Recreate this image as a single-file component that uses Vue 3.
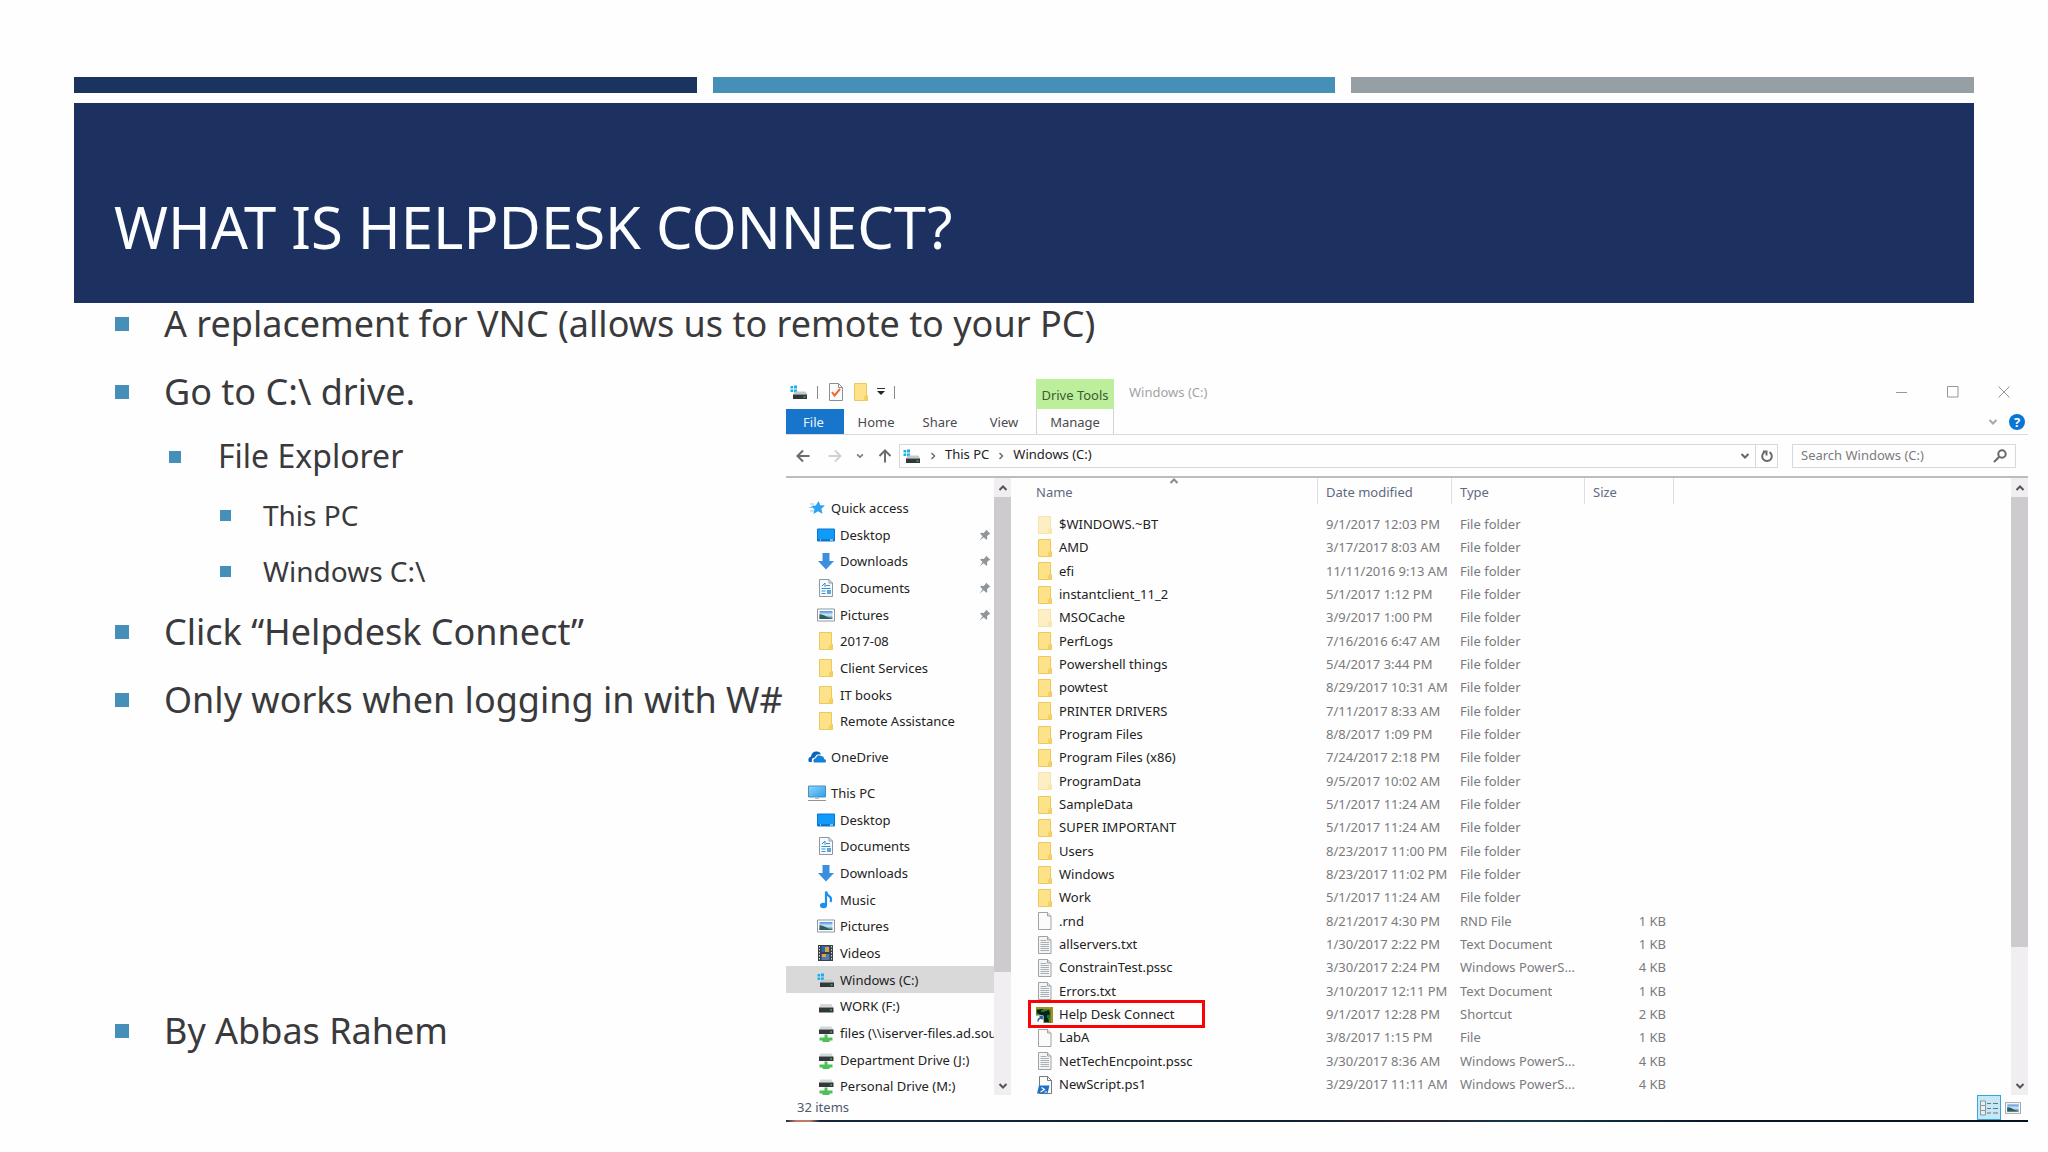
<script setup>
const ribbonTabs = ['Home', 'Share', 'View']

const navGroups = [
  {
    title: 'Quick access', icon: 'star',
    items: [
      { label: 'Desktop', icon: 'desktop', pinned: true },
      { label: 'Downloads', icon: 'download', pinned: true },
      { label: 'Documents', icon: 'document', pinned: true },
      { label: 'Pictures', icon: 'picture', pinned: true },
      { label: '2017-08', icon: 'folder' },
      { label: 'Client Services', icon: 'folder' },
      { label: 'IT books', icon: 'folder' },
      { label: 'Remote Assistance', icon: 'folder' },
    ],
  },
  { title: 'OneDrive', icon: 'cloud', items: [] },
  {
    title: 'This PC', icon: 'pc',
    items: [
      { label: 'Desktop', icon: 'desktop' },
      { label: 'Documents', icon: 'document' },
      { label: 'Downloads', icon: 'download' },
      { label: 'Music', icon: 'music' },
      { label: 'Pictures', icon: 'picture' },
      { label: 'Videos', icon: 'video' },
      { label: 'Windows (C:)', icon: 'sysdrive', selected: true },
      { label: 'WORK (F:)', icon: 'drive' },
      { label: 'files (\\\\iserver-files.ad.sout', icon: 'netdrive' },
      { label: 'Department Drive (J:)', icon: 'netdrive' },
      { label: 'Personal Drive (M:)', icon: 'netdrive' },
    ],
  },
]

const folder = (name, date, hidden = false) => ({ name, date, type: 'File folder', size: '', icon: 'folder', hidden })
const file = (name, date, type, size, icon) => ({ name, date, type, size, icon })

const files = [
  folder('$WINDOWS.~BT', '9/1/2017 12:03 PM', true),
  folder('AMD', '3/17/2017 8:03 AM'),
  folder('efi', '11/11/2016 9:13 AM'),
  folder('instantclient_11_2', '5/1/2017 1:12 PM'),
  folder('MSOCache', '3/9/2017 1:00 PM', true),
  folder('PerfLogs', '7/16/2016 6:47 AM'),
  folder('Powershell things', '5/4/2017 3:44 PM'),
  folder('powtest', '8/29/2017 10:31 AM'),
  folder('PRINTER DRIVERS', '7/11/2017 8:33 AM'),
  folder('Program Files', '8/8/2017 1:09 PM'),
  folder('Program Files (x86)', '7/24/2017 2:18 PM'),
  folder('ProgramData', '9/5/2017 10:02 AM', true),
  folder('SampleData', '5/1/2017 11:24 AM'),
  folder('SUPER IMPORTANT', '5/1/2017 11:24 AM'),
  folder('Users', '8/23/2017 11:00 PM'),
  folder('Windows', '8/23/2017 11:02 PM'),
  folder('Work', '5/1/2017 11:24 AM'),
  file('.rnd', '8/21/2017 4:30 PM', 'RND File', '1 KB', 'blank'),
  file('allservers.txt', '1/30/2017 2:22 PM', 'Text Document', '1 KB', 'text'),
  file('ConstrainTest.pssc', '3/30/2017 2:24 PM', 'Windows PowerS...', '4 KB', 'text'),
  file('Errors.txt', '3/10/2017 12:11 PM', 'Text Document', '1 KB', 'text'),
  { ...file('Help Desk Connect', '9/1/2017 12:28 PM', 'Shortcut', '2 KB', 'shortcut'), marked: true },
  file('LabA', '3/8/2017 1:15 PM', 'File', '1 KB', 'blank'),
  file('NetTechEncpoint.pssc', '3/30/2017 8:36 AM', 'Windows PowerS...', '4 KB', 'text'),
  file('NewScript.ps1', '3/29/2017 11:11 AM', 'Windows PowerS...', '4 KB', 'script'),
]
</script>

<template>
  <main class="slide">
    <svg class="sprite" aria-hidden="true">
      <defs>
        <linearGradient id="g-sky" x1="0" y1="0" x2="0" y2="1">
          <stop offset="0" stop-color="#4a8fe0" /><stop offset=".5" stop-color="#d6ecfa" /><stop offset="1" stop-color="#2d6a78" />
        </linearGradient>
        <linearGradient id="g-screen" x1="0" y1="0" x2="1" y2="1">
          <stop offset="0" stop-color="#8fd3fb" /><stop offset="1" stop-color="#2ba0ec" />
        </linearGradient>
      </defs>
      <symbol id="i-folder" viewBox="0 0 18 18">
        <path d="M2.500 .5h12v12h1v5h-13z" fill="#fde28a" stroke="#ecc95c" />
        <path d="M12.500 12.500h3v5h-4z" fill="#f5cf5f" />
      </symbol>
      <symbol id="i-star" viewBox="0 0 18 18">
        <path d="M10.500 2l1.800 4.300 4.700.2-3.600 3.200 1 5L10 12.300 5.500 15l1-4.800L3 7l4.800-.6z" fill="#2f9ff0" />
        <path d="M2 5h4M1 8.500h4M2 12h4" stroke="#8cc9f4" />
      </symbol>
      <symbol id="i-desktop" viewBox="0 0 18 18">
        <path d="M.5 3h17v12H.5z" fill="#109bfa" stroke="#0b78cf" />
        <path d="M1 14h16" stroke="#0a5ea8" /><path d="M3 14h1M13 14h3" stroke="#fff" />
      </symbol>
      <symbol id="i-download" viewBox="0 0 18 18">
        <path d="M5.500 1h7v8H17l-8 8.500L1 9h4.500z" fill="#3a8fdf" />
      </symbol>
      <symbol id="i-document" viewBox="0 0 18 18">
        <path d="M2.500.5h9.500l3.500 3.500v13.500h-13z" fill="#f7f9fb" stroke="#8f979e" />
        <path d="M12 .5V4h3.500" fill="none" stroke="#8f979e" />
        <path d="M5 7l3-3v4M9 6.500h4M4.500 9.500h9M4.500 12h4M4.500 14.500h4" fill="none" stroke="#2f93d6" />
        <path d="M10 11h4v4h-4z" fill="#5ba6db" />
      </symbol>
      <symbol id="i-picture" viewBox="0 0 18 18">
        <path d="M.5 3h17v12H.5z" fill="#fff" stroke="#90979d" />
        <path d="M2.500 5h13v8h-13z" fill="url(#g-sky)" />
        <path d="M2.500 8q5 1 8 3t5 2h-13z" fill="#2c5f62" />
      </symbol>
      <symbol id="i-cloud" viewBox="0 0 18 18">
        <path d="M1 14q-2-4 2-5.500Q4 3 9 3.500q3 0 4 3-5-1-6 3-4 0-3 4.500z" fill="#0a65b8" />
        <path d="M6 14.500q-2-3.500 2-4.500 1-4 5-2 3 0 3 3 3 .5 1.500 3.500z" fill="#1580d8" />
      </symbol>
      <symbol id="i-pc" viewBox="0 0 18 18">
        <path d="M.5 2h17v11H.5z" fill="url(#g-screen)" stroke="#4a90be" />
        <path d="M7 13h4v2H7z" fill="#b8c0c6" /><path d="M0 16.500h18" stroke="#8d979e" />
      </symbol>
      <symbol id="i-music" viewBox="0 0 18 18">
        <ellipse cx="6.500" cy="14.500" rx="3.500" ry="2.700" fill="#1a8fee" />
        <path d="M9 14V.5q1 3.500 3.500 5t1 5.500" fill="none" stroke="#1a8fee" stroke-width="2.200" />
      </symbol>
      <symbol id="i-video" viewBox="0 0 18 18">
        <path d="M1 1h15v16H1z" fill="#3b4046" />
        <path d="M2.500 2v15M14.500 2v15" stroke="#d3d7da" stroke-dasharray="1.500 1.500" />
        <path d="M4.500 2h8v6h-8z" fill="#2b64c0" /><path d="M8 3h4v5H8z" fill="#d9a92e" />
        <path d="M4.500 10h8v6h-8z" fill="#5478b2" /><path d="M5 10h4v3H5z" fill="#e2a33a" />
      </symbol>
      <symbol id="i-drive" viewBox="0 0 18 18">
        <path d="M3.500 7h11l1.500 3.500H2z" fill="#d5d7d9" />
        <path d="M2 10.500h14.500v5H2z" fill="#33373b" /><path d="M13 13h2" stroke="#4fe070" />
      </symbol>
      <symbol id="i-sysdrive" viewBox="0 0 18 18">
        <path d="M.5 3h2.700v2.500H.5zM4 2.500h3v3H4zM.5 6.500h2.700V9H.5zM4 6.500h3v3H4z" fill="#18b0ee" />
        <path d="M5 8.500h10.500l1.500 3H3z" fill="#c4c8cb" />
        <path d="M3 11.500h14v4.500H3z" fill="#33373b" /><path d="M13.500 14h2" stroke="#4fe070" />
      </symbol>
      <symbol id="i-netdrive" viewBox="0 0 18 18">
        <path d="M3.500 2.500h11l1.500 3H2z" fill="#d5d7d9" />
        <path d="M2 5.500h14.500v4.500H2z" fill="#33373b" /><path d="M13 8h2" stroke="#4fe070" />
        <path d="M7.500 10.500h3v3h5v3h-3v1.500h-7v-1.500h-3v-3h5z" fill="#4fc057" />
      </symbol>
      <symbol id="i-blank" viewBox="0 0 18 18">
        <path d="M2.500.5h9l3.500 3.500v13.500H2.500z" fill="#fbfbfb" stroke="#a2a2a5" />
        <path d="M11.500.5V4H15" fill="#e4e4e6" stroke="#a2a2a5" />
      </symbol>
      <symbol id="i-text" viewBox="0 0 18 18">
        <path d="M2.500.5h9l3.500 3.500v13.500H2.500z" fill="#f3f4f5" stroke="#a2a2a5" />
        <path d="M11.500.5V4H15" fill="#ddd" stroke="#a2a2a5" />
        <path d="M4.500 4.500h6M4.500 6.500h8.500M4.500 8.500h8.500M4.500 10.500h8.500M4.500 12.500h8.500M4.500 14.500h8.500" stroke="#a9b0b5" />
      </symbol>
      <symbol id="i-script" viewBox="0 0 18 18">
        <path d="M3.500.5h8l4 4v13h-12z" fill="#fbfbfb" stroke="#77797c" /><path d="M11.500.5v4h4" fill="none" stroke="#77797c" />
        <path d="M3 9.500h10.500l-2 8H1z" fill="#1f6fc8" />
        <path d="M5.500 11.500l3 2-4 2.500M8.500 16h2.500" fill="none" stroke="#fff" stroke-width="1.200" />
      </symbol>
      <symbol id="i-shortcut" viewBox="0 0 18 18">
        <path d="M0 1h17v16H0z" fill="#57851f" /><path d="M0 1h17v2H0zM15 1h2v16h-2z" fill="#a98f28" />
        <path d="M1 4l5-1 3 2 4-1 1 4-2 3 1 5H8l-1-6-6-3z" fill="#04231a" />
        <path d="M5 4h4v2H5zM11 9h3v3h-3z" fill="#117a3c" />
        <path d="M0 9.500h7.500V17H0z" fill="#fff" /><path d="M2 15.500q0-3.500 3.500-3.500M3.500 10.800h2.700v2.700" fill="none" stroke="#2a5fb0" stroke-width="1.400" />
      </symbol>
      <symbol id="i-check" viewBox="0 0 18 18">
        <path d="M2.500.5h9l4 4v13h-13z" fill="#fcfcfc" stroke="#8b8f93" /><path d="M11.500.5v4h4" fill="none" stroke="#8b8f93" />
        <path d="M5 9l2.500 3.500L13 6" fill="none" stroke="#ee6a30" stroke-width="2" />
      </symbol>
      <symbol id="i-pin" viewBox="0 0 12 12">
        <path d="M7 .5L11.500 5l-1.500.3-2 2 .3 2.700-1 .8-2.600-2.600L.5 11.500 3.600 7.200 1.200 4.800l.8-1 2.700.3 2-2z" fill="#8e959b" />
      </symbol>
      <symbol id="i-up" viewBox="0 0 10 8"><path d="M1.500 6L5 2.500 8.500 6" fill="none" stroke="currentColor" stroke-width="2" /></symbol>
      <symbol id="i-down" viewBox="0 0 10 8"><path d="M1.500 2L5 5.500 8.500 2" fill="none" stroke="currentColor" stroke-width="2" /></symbol>
      <symbol id="i-right" viewBox="0 0 6 8"><path d="M1.500 1L4.500 4l-3 3" fill="none" stroke="currentColor" stroke-width="1.400" /></symbol>
    </svg>

    <div class="stripes"><i class="navy"></i><i class="blue"></i><i class="grey"></i></div>
    <header class="banner"><h1>WHAT IS HELPDESK CONNECT?</h1></header>

    <div class="content">
      <ul class="points">
        <li>A replacement for VNC (allows us to remote to your PC)</li>
        <li class="branch">
          Go to C:\ drive.
          <ul class="level2">
            <li>
              File Explorer
              <ul class="level3">
                <li>This PC</li>
                <li>Windows C:\</li>
              </ul>
            </li>
          </ul>
        </li>
        <li>Click “Helpdesk Connect”</li>
        <li>Only works when logging in with W#</li>
        <li class="author">By Abbas Rahem</li>
      </ul>

      <section class="explorer" aria-label="File Explorer">
        <div class="titlebar">
          <div class="quick">
            <svg class="icon"><use href="#i-sysdrive" /></svg>
            <span class="bar"></span>
            <button aria-label="Properties"><svg class="icon"><use href="#i-check" /></svg></button>
            <button aria-label="New folder"><svg class="icon"><use href="#i-folder" /></svg></button>
            <button aria-label="Customize toolbar">
              <svg width="8" height="8" viewBox="0 0 8 8"><path d="M0 .5h8" stroke="#333" /><path d="M0 3h8L4 7z" fill="#222" /></svg>
            </button>
            <span class="bar"></span>
          </div>
          <span class="context">Drive Tools</span>
          <span class="caption">Windows (C:)</span>
          <div class="window-buttons">
            <button aria-label="Minimize"><svg width="12" height="12"><path d="M0 6.500h11" /></svg></button>
            <button aria-label="Maximize"><svg width="12" height="12"><path d="M.5.5h10.500v10.500H.5z" /></svg></button>
            <button aria-label="Close"><svg width="12" height="12"><path d="M.5.5l11 11M11.500.5l-11 11" /></svg></button>
          </div>
        </div>

        <div class="ribbon">
          <button class="file-tab">File</button>
          <button v-for="tab in ribbonTabs" :key="tab" class="tab">{{ tab }}</button>
          <button class="tab manage">Manage</button>
          <div class="ribbon-end">
            <button aria-label="Expand ribbon"><svg class="chev"><use href="#i-down" /></svg></button>
            <button class="help" aria-label="Help">?</button>
          </div>
        </div>

        <div class="address">
          <div class="arrows">
            <button aria-label="Back"><svg width="14" height="14"><path d="M13.500 7H1.500M7 1.500L1.500 7 7 12.500" /></svg></button>
            <button aria-label="Forward" class="off"><svg width="14" height="14"><path d="M.5 7h12M7 1.500L12.500 7 7 12.500" /></svg></button>
            <button aria-label="Recent locations"><svg class="chev small"><use href="#i-down" /></svg></button>
            <button aria-label="Up"><svg width="14" height="14"><path d="M7 13.500V1.500M1.500 7L7 1.500 12.500 7" /></svg></button>
          </div>
          <div class="path">
            <svg class="icon"><use href="#i-sysdrive" /></svg>
            <svg class="sep"><use href="#i-right" /></svg>
            <a href="#">This PC</a>
            <svg class="sep"><use href="#i-right" /></svg>
            <a href="#">Windows (C:)</a>
            <button class="history" aria-label="Previous locations"><svg class="chev"><use href="#i-down" /></svg></button>
            <button class="refresh" aria-label="Refresh">
              <svg width="14" height="14"><path d="M9.500 3.200a4.800 4.800 0 1 1-5 0" /><path d="M3 2.500h3.500V6.500" /></svg>
            </button>
          </div>
          <label class="search">
            <input type="text" placeholder="Search Windows (C:)" aria-label="Search Windows (C:)" />
            <svg width="14" height="14"><circle cx="9" cy="5" r="3.700" /><path d="M6.300 7.700L1 13" /></svg>
          </label>
        </div>

        <div class="panes">
          <nav class="tree">
            <ul v-for="group in navGroups" :key="group.title">
              <li>
                <a href="#" class="root"><svg class="icon"><use :href="'#i-' + group.icon" /></svg>{{ group.title }}</a>
              </li>
              <li v-for="item in group.items" :key="item.label">
                <a href="#" :class="{ selected: item.selected }">
                  <svg class="icon"><use :href="'#i-' + item.icon" /></svg><span>{{ item.label }}</span>
                  <svg v-if="item.pinned" class="pin"><use href="#i-pin" /></svg>
                </a>
              </li>
            </ul>
          </nav>
          <div class="scroll">
            <svg class="chev"><use href="#i-up" /></svg>
            <i class="thumb tree-thumb"></i>
            <svg class="chev last"><use href="#i-down" /></svg>
          </div>

          <div class="list">
            <table>
              <thead>
                <tr>
                  <th class="c-name"><span>Name<svg class="sort"><use href="#i-up" /></svg></span></th>
                  <th class="c-date"><span>Date modified</span></th>
                  <th class="c-type"><span>Type</span></th>
                  <th class="c-size"><span>Size</span></th>
                </tr>
              </thead>
              <tbody>
                <tr v-for="row in files" :key="row.name">
                  <td class="name" :class="{ faded: row.hidden, marked: row.marked }">
                    <div><svg class="icon"><use :href="'#i-' + row.icon" /></svg>{{ row.name }}</div>
                  </td>
                  <td>{{ row.date }}</td>
                  <td>{{ row.type }}</td>
                  <td class="size">{{ row.size }}</td>
                </tr>
              </tbody>
            </table>
          </div>
          <div class="scroll">
            <svg class="chev"><use href="#i-up" /></svg>
            <i class="thumb list-thumb"></i>
            <svg class="chev last"><use href="#i-down" /></svg>
          </div>
        </div>

        <footer class="status">
          <span>32 items</span>
          <div class="views">
            <button class="active" aria-label="Details view">
              <svg width="18" height="16"><path d="M.5 1h5v14h-5zM.5 5.500h5M.5 10.500h5" fill="#e6eef2" stroke="#8b979f" /><path d="M7 3.500h4M13 3.500h5M7 8.500h4M13 8.500h5M7 13h4M13 13h5" stroke="#66757e" /></svg>
            </button>
            <button aria-label="Large icons view"><svg class="icon"><use href="#i-picture" /></svg></button>
          </div>
        </footer>
      </section>
    </div>
  </main>
</template>

<style>
body { margin: 0; background: #fefefe; }
</style>

<style scoped>
*, *::before, *::after { box-sizing: border-box; }
.slide { font-family: "Noto Sans", "Open Sans", sans-serif; color: #3a3a3c; padding-top: 77px; overflow: hidden; }
.sprite { position: absolute; width: 0; height: 0; }
ul { list-style: none; margin: 0; padding: 0; }
button { border: 0; padding: 0; margin: 0; background: none; font: inherit; color: inherit; display: flex; align-items: center; justify-content: center; }
a { color: inherit; text-decoration: none; }
svg { flex: none; display: block; }
.icon { width: 18px; height: 18px; }
.chev { width: 10px; height: 8px; }

.stripes { display: grid; grid-template-columns: repeat(3, 1fr); gap: 16px; margin: 0 74px; height: 16px; }
.navy { background: #1a335f; }
.blue { background: #458fb8; }
.grey { background: #969fa4; }
.banner { margin: 10px 74px 0; height: 200px; padding: 88px 40px 0; background: #1c315f; color: #fbfdff; }
h1 { margin: 0; font-size: 58px; line-height: 72px; font-weight: 400; white-space: nowrap; }

.content { display: grid; grid-template-columns: 712px 1fr; margin: 0 20px 0 74px; }
.points { grid-column: 1 / 3; grid-row: 1; padding: 3px 0 0 41px; font-size: 36px; line-height: 36px; white-space: nowrap; }
.points li { position: relative; padding-left: 49px; margin-bottom: 32px; }
.points li::before { content: ""; position: absolute; left: 0; top: 11px; width: 14px; height: 14px; background: #458fb8; }
.points li.branch { margin-bottom: 25px; }
.points .level2 { margin: 28px 0 0 5px; font-size: 32px; }
.points .level2 li::before { top: 13px; width: 12px; height: 12px; }
.points .level2 > li { margin-bottom: 0; }
.points .level3 { margin: 23px 0 0 2px; font-size: 28px; }
.points .level3 li { padding-left: 43px; margin-bottom: 20px; }
.points .level3 li:last-child { margin-bottom: 0; }
.points .level3 li::before { width: 11px; height: 11px; }
.points li.author { margin: 295px 0 0; }

.explorer { grid-column: 2; grid-row: 1; z-index: 1; margin-top: 72px; background: #fefefe; font-size: 13px; line-height: 20px; color: #222; padding-bottom: 2px; background-image: linear-gradient(90deg, #1a2b40 0, #c07a68 10px, #c07a68 24px, #12263a 34px, #0d2233 40%, #2b1f30 50%, #0f3b48 60%, #0a1626 75%, #06131f); background-position: bottom; background-size: 100% 2px; background-repeat: no-repeat; align-self: start; }

.titlebar { display: flex; height: 34px; align-items: center; padding-right: 18px; }
.quick { display: flex; align-items: center; width: 250px; padding-left: 4px; gap: 7px; }
.bar { width: 1px; height: 13px; background: #8a8a8a; margin: 0 2px; }
.context { align-self: flex-end; width: 78px; height: 30px; line-height: 32px; background: #bcee9c; color: #3d5a33; text-align: center; }
.caption { padding-left: 15px; color: #a3a3a6; }
.window-buttons { margin-left: auto; display: flex; gap: 39px; }
.window-buttons path { fill: none; stroke: #97979a; }

.ribbon { display: flex; height: 26px; border-bottom: 1px solid #dadade; color: #4a4a4e; }
.file-tab { width: 58px; padding-right: 3px; background: #1776cb; color: #eaf4fd; }
.tab { width: 64px; }
.tab.manage { width: 78px; border: solid #d4d4d8; border-width: 0 1px; background: #fefefe; }
.ribbon-end { margin-left: auto; display: flex; align-items: center; gap: 11px; padding-right: 3px; color: #a8a8ac; }
.help { width: 16px; height: 16px; border-radius: 50%; background: #0a76d4; color: #fff; font-weight: 700; }

.address { display: flex; align-items: center; height: 43px; border-bottom: 2px solid #bbbbc0; padding-right: 12px; }
.arrows { display: flex; align-items: center; gap: 14px; padding-left: 10px; }
.arrows path { fill: none; stroke: #6c6c70; stroke-width: 2; }
.arrows .off { margin-left: 4px; }
.arrows .off path { stroke: #d2d2d5; }
.chev.small { width: 8px; color: #77777a; }
.path { flex: 1; display: flex; align-items: center; height: 24px; margin: 0 14px 0 7px; border: 1px solid #d9d9dd; padding-left: 3px; gap: 9px; }
.path a { padding-bottom: 3px; }
.sep { width: 6px; height: 8px; color: #666; }
.history { margin-left: auto; color: #666; }
.refresh { width: 22px; height: 22px; border-left: 1px solid #d9d9dd; margin-left: -4px; }
.refresh path { fill: none; stroke: #68686b; stroke-width: 2; }
.search { width: 224px; height: 24px; display: flex; align-items: center; border: 1px solid #d9d9dd; padding: 0 8px; }
.search input { flex: 1; min-width: 0; border: 0; padding: 0 0 2px; background: none; font: inherit; line-height: 20px; color: #222; outline: 0; }
.search input::placeholder { color: #7b7b7e; opacity: 1; }
.search circle, .search path { fill: none; stroke: #68686b; stroke-width: 2; }

.panes { display: flex; height: 617px; }
.tree { width: 208px; padding-top: 16px; overflow: hidden; white-space: nowrap; }
.tree ul { margin-bottom: 9px; }
.tree a { display: flex; align-items: center; height: 27px; padding-left: 31px; gap: 5px; }
.tree li:nth-child(3n) a { height: 26px; }
.tree a.root { padding-left: 22px; }
.tree a.selected { background: #d9d9da; }
.pin { width: 12px; height: 12px; margin: 0 3px 0 auto; }
.scroll { display: flex; flex-direction: column; align-items: center; width: 17px; background: #f0eef0; color: #555558; }
.scroll .chev { margin: 6px 0 5px; }
.scroll .last { margin-top: auto; }
.thumb { width: 17px; background: #cdcbce; }
.tree-thumb { height: 475px; }
.list-thumb { height: 450px; }
.list { flex: 1; padding-left: 17px; }
table { border-collapse: collapse; table-layout: fixed; width: 646px; white-space: nowrap; color: #7a7a7d; }
th, td { padding: 0; text-align: left; font-weight: 400; }
th { height: 35px; vertical-align: top; color: #5d6a80; }
th span { display: block; height: 26px; line-height: 28px; padding-left: 8px; border-right: 1px solid #dedde2; }
.c-name { width: 290px; }
.c-date { width: 134px; }
.c-type { width: 133px; }
.c-size { width: 89px; }
.c-name span { position: relative; }
.sort { position: absolute; top: -1px; left: 141px; width: 10px; height: 8px; color: #8a8a8e; }
td { height: 23px; line-height: 23px; padding-left: 8px; }
tr:nth-child(3n) td { height: 24px; }
td.size { text-align: right; padding-right: 8px; }
td.name { position: relative; color: #222; }
.name div { display: flex; align-items: center; gap: 5px; }
.faded .icon { opacity: .5; }
.marked::after { content: ""; position: absolute; left: 0; top: -3px; width: 177px; height: 28px; border: 3px solid #fb0207; }

.status { display: flex; justify-content: space-between; height: 25px; padding-left: 11px; line-height: 25px; color: #4d5a70; }
.views { display: flex; gap: 4px; padding-right: 7px; }
.views .active { width: 24px; background: #c4e8f6; border: 1px solid #3aa5dc; }
.views .icon { width: 16px; }
</style>
